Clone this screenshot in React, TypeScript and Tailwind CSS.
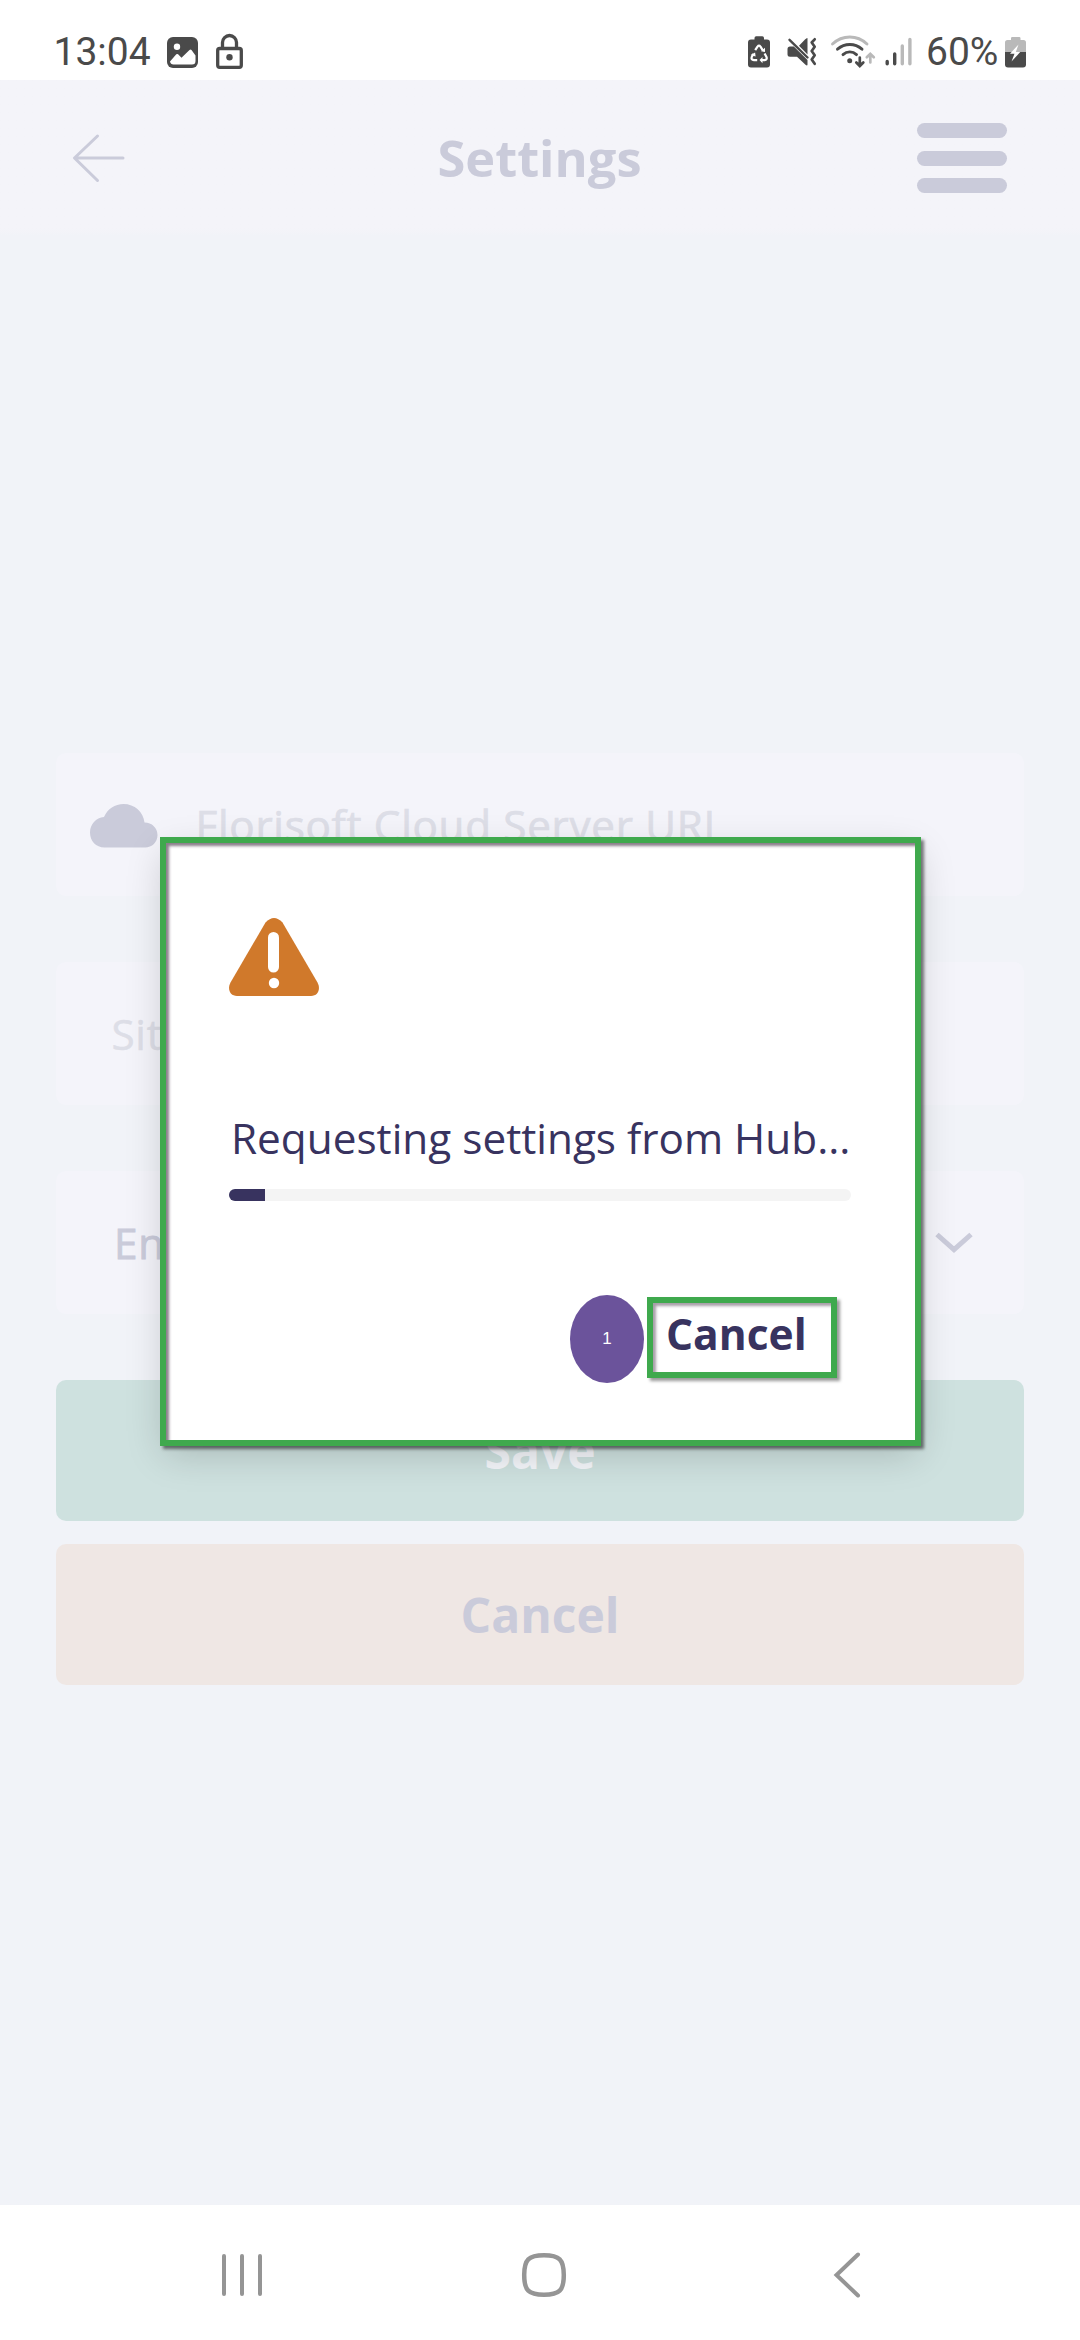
const DARK = "#4a4a4a";
const LIGHT = "#b9b9b9";

function PictureIcon() {
  return (
    <svg className="ml-[15px] h-[37px] w-[33px] shrink-0" viewBox="166 33 33 37">
      <rect x="167" y="37" width="31" height="31" rx="6" fill={DARK} />
      <circle cx="177" cy="46.7" r="3.2" fill="#fff" />
      <path d="M170 61.5l6.3-7.2q.9-.8 1.8 0l3.4 3.400 8-7.700q1-.9 2 0l4 5.500v5.500q0 3.500-3.500 3.500h-18.500q-3 0-3.500-3z" fill="#fff" />
    </svg>
  );
}

function LockIcon() {
  return (
    <svg className="ml-[16px] h-[37px] w-[29px] shrink-0" viewBox="215 33 29 37" fill="none" stroke={DARK} strokeWidth="3.300">
      <rect x="217.700" y="48.500" width="23.600" height="18.800" rx="2" />
      <path d="M222.500 48v-5.500a7 7 0 0 1 14 0V48" />
      <circle cx="229.500" cy="57.300" r="3.200" fill={DARK} stroke="none" />
    </svg>
  );
}

function RecycleBatteryIcon() {
  return (
    <svg className="h-[37px] w-[24px] shrink-0" viewBox="747 33 24 37">
      <path d="M754.500 39.500v-1.500q0-1.700 1.700-1.700h6.100q1.700 0 1.700 1.700v1.500h3q3 0 3 3v22q0 3-3 3h-16q-3 0-3-3v-22q0-3 3-3z" fill={DARK} />
      <g fill="none" stroke="#fff" strokeWidth="2.200" strokeLinejoin="round">
        <path d="M755.200 50.200l2.300-3.600q1.500-1.800 3 0l2.300 3.800" />
        <path d="M764.600 53.400l2 3.800q.7 2.600-1.900 2.900h-3.700" />
        <path d="M757.200 60.100h-3.200q-3.400-.3-2.200-3.300l1.700-2.900" />
      </g>
      <path d="M765 47.800v4.200l-4-.8zM762.500 57v6.200l-3-3.100zM750.600 55l4.500-2.500.5 4z" fill="#fff" />
    </svg>
  );
}

function MuteVibrateIcon() {
  return (
    <svg className="ml-[15px] h-[37px] w-[32px] shrink-0" viewBox="786 33 32 37">
      <path d="M807.500 38.500v16L799 45.700l6-6.200q2.500-2.400 2.500-1zM790 46.500h3.800L807.500 60v4.500q0 1.800-2 .3l-8.500-8h-7q-2.500 0-2.500-2.500v-5.300q0-2.500 2.500-2.500z" fill={DARK} />
      <path d="M789.500 39.800l18 17.700" stroke={DARK} strokeWidth="2.400" strokeLinecap="round" />
      <path d="M814.700 39.300l-3 3.200 3 4.200-3 4.300 3 4.300-3 4.200 3 4.300" fill="none" stroke={DARK} strokeWidth="2.700" strokeLinecap="round" strokeLinejoin="round" />
    </svg>
  );
}

function WifiIcon() {
  return (
    <svg className="ml-[12px] h-[37px] w-[46px] shrink-0" viewBox="830 33 46 37" fill="none" strokeWidth="2.900" strokeLinecap="round">
      <path d="M832.500 44q7.500-7 17.300-7t17.200 7" stroke={LIGHT} />
      <path d="M837.500 49.200q5.500-4.700 12.300-4.700t12.200 4.700" stroke={DARK} />
      <path d="M843 54.600q3-2.700 6.800-2.700t6.700 2.700" stroke={DARK} />
      <circle cx="849.700" cy="60.800" r="2.500" fill={DARK} />
      <path d="M859.800 57.500v8M856.300 62.500l3.500 3.500 3.500-3.500" stroke={DARK} strokeWidth="2.700" />
      <path d="M870.300 62.500v-8.500M866.800 57.300l3.500-3.500 3.500 3.500" stroke={LIGHT} strokeWidth="2.700" />
    </svg>
  );
}

function SignalIcon() {
  return (
    <svg className="ml-[9px] h-[37px] w-[28px] shrink-0" viewBox="885 33 28 37" strokeWidth="3.400" strokeLinecap="round">
      <path d="M887.200 61.500v2.200M894.700 54v9.700" stroke={DARK} />
      <path d="M902.300 46v17.700M909.900 39.500v24.200" stroke={LIGHT} />
    </svg>
  );
}

function ChargingBatteryIcon() {
  return (
    <svg className="ml-[6px] h-[37px] w-[23px] shrink-0" viewBox="1004 33 23 37">
      <path d="M1011 40v-1.700q0-1.300 1.300-1.300h6.900q1.300 0 1.300 1.300V40h3q2.500 0 2.500 2.500V52h-21v-9.500q0-2.500 2.500-2.500z" fill={LIGHT} />
      <path d="M1005 52h21v12.500q0 3-3 3h-15q-3 0-3-3z" fill={DARK} />
      <path d="M1018.500 44.500l-8.500 9.300h4.500l-3 7.800 8.700-9.600h-4.400z" fill="#fff" />
    </svg>
  );
}

function StatusBar() {
  return (
    <div className="flex h-20 items-center bg-white pt-[23px] pr-[53px] pl-[53.500px] font-[Roboto,sans-serif] text-[39px] leading-[40px] text-[#4a4a4a]">
      <span className="w-[97.500px]">13:04</span>
      <PictureIcon />
      <LockIcon />
      <div className="ml-auto flex items-center">
        <RecycleBatteryIcon />
        <MuteVibrateIcon />
        <WifiIcon />
        <SignalIcon />
        <span className="ml-[13px] w-[72px]">60%</span>
        <ChargingBatteryIcon />
      </div>
    </div>
  );
}

function Header() {
  return (
    <header className="flex h-[156px] items-center justify-between bg-linear-to-b from-[#f4f4f9] from-95% to-[#f1f3f8] pr-[73px] pl-[72px]">
      <div className="w-[90px]">
        <svg className="h-[50px] w-[54px]" viewBox="72 133 54 50" fill="none" stroke="#cacbda" strokeWidth="3" strokeLinecap="round" strokeLinejoin="round">
          <path d="M97.500 136L74.500 158l23 22.500M75 158h48" />
        </svg>
      </div>
      <h1 className="text-[50.600px] leading-[60px] font-bold text-[#cacbda]">Settings</h1>
      <div className="flex w-[90px] flex-col gap-[12.500px]">
        <span className="h-[15px] rounded-full bg-[#cacbda]" />
        <span className="h-[15px] rounded-full bg-[#cacbda]" />
        <span className="h-[15px] rounded-full bg-[#cacbda]" />
      </div>
    </header>
  );
}

function SettingsForm() {
  return (
    <main className="flex flex-1 flex-col px-14 pt-[517px]">
      <div className="flex h-[143px] items-center rounded-[10px] bg-[#f4f4fa] pl-[33px] text-[42.200px] tracking-[0.700px] text-[#dddee7] [-webkit-text-stroke:0.700px_#dddee7]">
        <svg className="h-[46px] w-[70px] shrink-0" viewBox="0 0 70 46" fill="#cacbda">
          <path d="M15.500 45.500C7 45.500 1 39 1 30.500c0-8 6-15 14-15.500C18.500 7 26 2 34.500 2c11 0 20 8 21 18.500C63 20.500 68.500 26 68.500 33S63 45.500 56 45.500z" />
        </svg>
        <span className="ml-[36.500px]">Florisoft Cloud Server URL</span>
      </div>
      <div className="mt-[66px] flex h-[143px] items-center rounded-[10px] bg-[#f4f4fa] pl-[55.500px] text-[42.200px] tracking-[0.700px] text-[#dddee7] [-webkit-text-stroke:0.500px_#dddee7]">
        Site
      </div>
      <div className="mt-[66px] flex h-[143px] items-center justify-between rounded-[10px] bg-[#f4f4fa] pr-[50px] pl-[58px] text-[42.200px] tracking-[0.700px] text-[#cacbda] [-webkit-text-stroke:0.900px_#cacbda]">
        English
        <svg className="h-[24px] w-[40px]" viewBox="0 0 40 24" fill="none" stroke="#cacbda" strokeWidth="5">
          <path d="M3 3.500l17 15.200 17-15.200" />
        </svg>
      </div>
      <button className="mt-[66px] h-[141px] rounded-[10px] bg-[#cee1df] text-[48px] font-bold text-[#f4f6fa]">Save</button>
      <button className="mt-[23px] h-[141px] rounded-[10px] bg-[#efe7e4] text-[48px] font-bold text-[#cacbda]">Cancel</button>
    </main>
  );
}

function NavigationBar() {
  return (
    <nav className="flex h-[135px] items-center justify-between bg-white pt-[5px] pr-[218px] pl-[220px]">
      <svg className="h-[48px] w-[44px]" viewBox="220 2251 44 48" stroke="#959595" strokeWidth="4" strokeLinecap="round">
        <path d="M224 2256v38M242 2256v38M260 2256v38" />
      </svg>
      <svg className="mr-[8px] h-[48px] w-[48px]" viewBox="0 0 48 48" fill="none" stroke="#959595" strokeWidth="4.500">
        <path d="M24 4.200c15.500 0 19.800 4.300 19.800 19.800S39.500 43.800 24 43.800 4.200 39.500 4.200 24 8.500 4.200 24 4.200z" />
      </svg>
      <svg className="h-[48px] w-[30px]" viewBox="832 2251 30 48" fill="none" stroke="#959595" strokeWidth="4" strokeLinecap="round">
        <path d="M858 2254.500L836.500 2275l21.500 20.500" />
      </svg>
    </nav>
  );
}

function RequestDialog() {
  return (
    <div className="absolute top-[837px] left-[160px] shadow-[0_12px_36px_-4px_rgba(0,0,0,0.18)]">
      <div
        role="dialog"
        className="flex h-[609px] w-[761px] flex-col border-6 border-[#3fa94d] bg-white pt-[74px] pl-[63px] text-[#38335f] shadow-[3px_3px_3px_rgba(0,0,0,0.5),inset_3px_3px_3px_rgba(60,40,60,0.6)]"
      >
        <svg className="h-[80px] w-[90px]" viewBox="0 0 90 80">
          <path d="M36.500 5.500Q45-3.500 53.500 5.500L88.500 65.500C92 72 89 79 82 79H8C1 79-2 72 1.500 65.500z" fill="#d0792b" />
          <rect x="39" y="15" width="11" height="40.500" rx="5.500" fill="#fff" />
          <circle cx="45" cy="66" r="5.200" fill="#fff" />
        </svg>
        <p className="mt-[111px] ml-[2px] h-[60px] text-[42.300px] leading-[60px] whitespace-nowrap">Requesting settings from Hub...</p>
        <div className="mt-[21px] h-[12px] w-[622px] overflow-hidden rounded-full bg-[#f4f4f4]">
          <div className="h-full w-[36px] bg-[#38335f]" />
        </div>
        <div className="mt-[94px] ml-[341px] flex items-start">
          <div className="flex h-[88px] w-[74px] items-center justify-center rounded-[50%] bg-[#6b539b] font-['Liberation_Sans',sans-serif] text-[17px] text-white">
            1
          </div>
          <button className="mt-[2px] ml-[3px] h-[81px] w-[190px] border-6 border-[#3fa94d] pb-[7px] pl-[13px] text-left text-[42.500px] leading-[60px] font-bold shadow-[3px_3px_3px_rgba(0,0,0,0.4),inset_3px_3px_3px_rgba(60,40,60,0.45)]">
            Cancel
          </button>
        </div>
      </div>
    </div>
  );
}

export default function App() {
  return (
    <div className="relative flex h-[2340px] w-[1080px] flex-col overflow-hidden bg-[#f1f3f8] font-['Open_Sans',sans-serif]">
      <StatusBar />
      <Header />
      <SettingsForm />
      <NavigationBar />
      <RequestDialog />
    </div>
  );
}
